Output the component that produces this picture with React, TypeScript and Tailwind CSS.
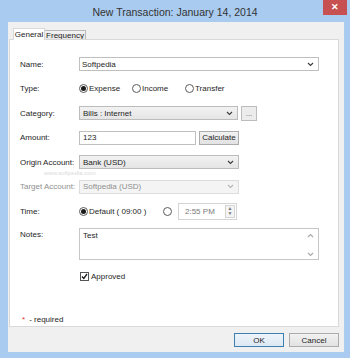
import React from 'react';

const Chevron = ({ color = '#3a3a3a' }: { color?: string }) => (
  <svg width="7" height="5" viewBox="0 0 7 5">
    <path d="M1 1l2.5 2.5L6 1" fill="none" stroke={color} strokeWidth="1.1" />
  </svg>
);

const Radio = ({ checked }: { checked?: boolean }) => (
  <span className="flex h-[9px] w-[9px] shrink-0 items-center justify-center rounded-full border border-[#5c5c5c] bg-white">
    {checked && <span className="h-[5px] w-[5px] rounded-full bg-[#1a1a1a]" />}
  </span>
);

const Row = ({ label, disabled, children }: { label: string; disabled?: boolean; children: React.ReactNode }) => (
  <div className="flex h-[24.5px] items-center">
    <div className={disabled ? 'w-[59px] text-[#8f8f8f]' : 'w-[59px] text-[#1e1e1e]'}>{label}</div>
    <div className="flex items-center">{children}</div>
  </div>
);

const App = () => {
  return (
    <div className="flex h-[358px] w-[350px] flex-col bg-[#a9cbf0] font-['Liberation_Sans',Arial,sans-serif] text-[8px] leading-[9px] text-[#1e1e1e]">
      {/* Title bar */}
      <div className="grid h-[22px] grid-cols-[1fr_auto_1fr]">
        <div />
        <div className="pt-[6px] text-[10.5px] leading-[12px] text-[#333]">New Transaction: January 14, 2014</div>
        <div className="flex justify-end pr-[3px]">
          <div className="flex h-[15px] w-[24px] items-center justify-center bg-[#c75050] text-[9px] font-bold leading-none text-white">
            ✕
          </div>
        </div>
      </div>

      {/* Client area */}
      <div className="mb-[6px] ml-[8px] mr-[6px] flex flex-1 flex-col bg-[#f0f0f0]">
        {/* Tabs */}
        <div className="flex h-[17px] items-end pl-[5px]">
          <div className="relative z-10 -mb-px flex h-[12px] w-[32px] items-center justify-center border border-b-0 border-[#d9d9d9] bg-white text-[#1e1e1e]">
            General
          </div>
          <div className="flex h-[9px] w-[41px] items-center justify-center border border-b-0 border-l-0 border-[#b9b9b9] bg-gradient-to-b from-[#f3f3f3] to-[#e6e6e6]">
            Frequency
          </div>
        </div>

        {/* Panel */}
        <div className="relative ml-[1px] mr-[5px] flex h-[288px] flex-col border border-[#d9d9d9] bg-white pl-[10px]">
          <div className="absolute left-[34px] top-[130px] text-[6px] leading-[6px] text-[#dadada]">www.softpedia.com</div>

          <div className="relative flex flex-col pt-[12px]">
            <Row label="Name:">
              <div className="flex h-[14px] w-[240px] items-center justify-between border border-[#bfbfbf] bg-white pl-[2px] pr-[4px]">
                <span>Softpedia</span>
                <Chevron />
              </div>
            </Row>

            <Row label="Type:">
              <div className="flex w-[53px] items-center gap-[1px]">
                <Radio checked />
                <span>Expense</span>
              </div>
              <div className="flex w-[53px] items-center gap-[1px]">
                <Radio />
                <span>Income</span>
              </div>
              <div className="flex items-center gap-[1px]">
                <Radio />
                <span>Transfer</span>
              </div>
            </Row>

            <Row label="Category:">
              <div className="flex h-[14px] w-[159px] items-center justify-between border border-[#bcbcbc] bg-gradient-to-b from-[#f2f2f2] to-[#e5e5e5] pl-[3px] pr-[4px]">
                <span>Bills : Internet</span>
                <Chevron />
              </div>
              <div className="ml-[3px] flex h-[15px] w-[16px] items-center justify-center border border-[#bcbcbc] bg-[#ececec] text-[#666]">
                ...
              </div>
            </Row>

            <Row label="Amount:">
              <div className="flex h-[14px] w-[117px] items-center border border-[#bfbfbf] bg-white pl-[3px]">123</div>
              <div className="ml-[3px] flex h-[14px] w-[40px] items-center justify-center border border-[#acacac] bg-gradient-to-b from-[#f2f2f2] to-[#e2e2e2]">
                Calculate
              </div>
            </Row>

            <Row label="Origin Account:">
              <div className="flex h-[14px] w-[160px] items-center justify-between border border-[#bcbcbc] bg-gradient-to-b from-[#f2f2f2] to-[#e5e5e5] pl-[3px] pr-[4px]">
                <span>Bank (USD)</span>
                <Chevron />
              </div>
            </Row>

            <Row label="Target Account:" disabled>
              <div className="flex h-[14px] w-[160px] items-center justify-between border border-[#dcdcdc] bg-[#f4f4f4] pl-[3px] pr-[4px] text-[#8f8f8f]">
                <span>Softpedia (USD)</span>
                <Chevron color="#b4b4b4" />
              </div>
            </Row>

            <Row label="Time:">
              <div className="flex w-[84px] items-center gap-[1px]">
                <Radio checked />
                <span>Default ( 09:00 )</span>
              </div>
              <div className="flex w-[15px]">
                <Radio />
              </div>
              <div className="flex h-[17px] w-[59px] items-center justify-between border border-[#d4d4d4] bg-white pl-[6px] pr-[1px] text-[#7a7a7a]">
                <span>2:55 PM</span>
                <div className="flex h-[13px] w-[10px] flex-col items-center justify-center border border-[#d4d4d4] bg-[#f4f4f4] text-[5px] leading-[5px] text-[#777]">
                  <span>▲</span>
                  <span>▼</span>
                </div>
              </div>
            </Row>

            <div className="mt-[4.5px] flex">
              <div className="w-[59px] pt-[2px]">Notes:</div>
              <div className="flex h-[32px] w-[240px] justify-between border border-[#c6c6c6] bg-white pl-[3px] pr-[4px] pt-[2px]">
                <span>Test</span>
                <div className="flex flex-col items-center justify-between pb-[2px] pt-[2px]">
                  <svg width="7" height="5" viewBox="0 0 7 5">
                    <path d="M1 4l2.5-2.5L6 4" fill="none" stroke="#a8a8a8" strokeWidth="1.1" />
                  </svg>
                  <Chevron color="#a8a8a8" />
                </div>
              </div>
            </div>

            <div className="mt-[12px] flex items-center pl-[60px]">
              <span className="flex h-[9px] w-[9px] items-center justify-center border border-[#555] bg-white">
                <svg width="7" height="7" viewBox="0 0 7 7">
                  <path d="M1 3.5l1.8 2L6 1" fill="none" stroke="#1a1a1a" strokeWidth="1.3" />
                </svg>
              </span>
              <span className="ml-[2px]">Approved</span>
            </div>
          </div>

          <div className="mt-auto flex items-center pb-[2px] pl-[2px]">
            <span className="text-[#e03030]">*</span>
            <span className="ml-[4px]">- required</span>
          </div>
        </div>

        {/* Buttons */}
        <div className="flex justify-end gap-[5px] pr-[5px] pt-[6px]">
          <div className="flex h-[14px] w-[50px] items-center justify-center border border-[#3c7fb1] bg-gradient-to-b from-[#eef4fa] to-[#dde8f3]">
            OK
          </div>
          <div className="flex h-[14px] w-[50px] items-center justify-center border border-[#acacac] bg-gradient-to-b from-[#f2f2f2] to-[#e2e2e2]">
            Cancel
          </div>
        </div>
      </div>
    </div>
  );
};

export default App;
